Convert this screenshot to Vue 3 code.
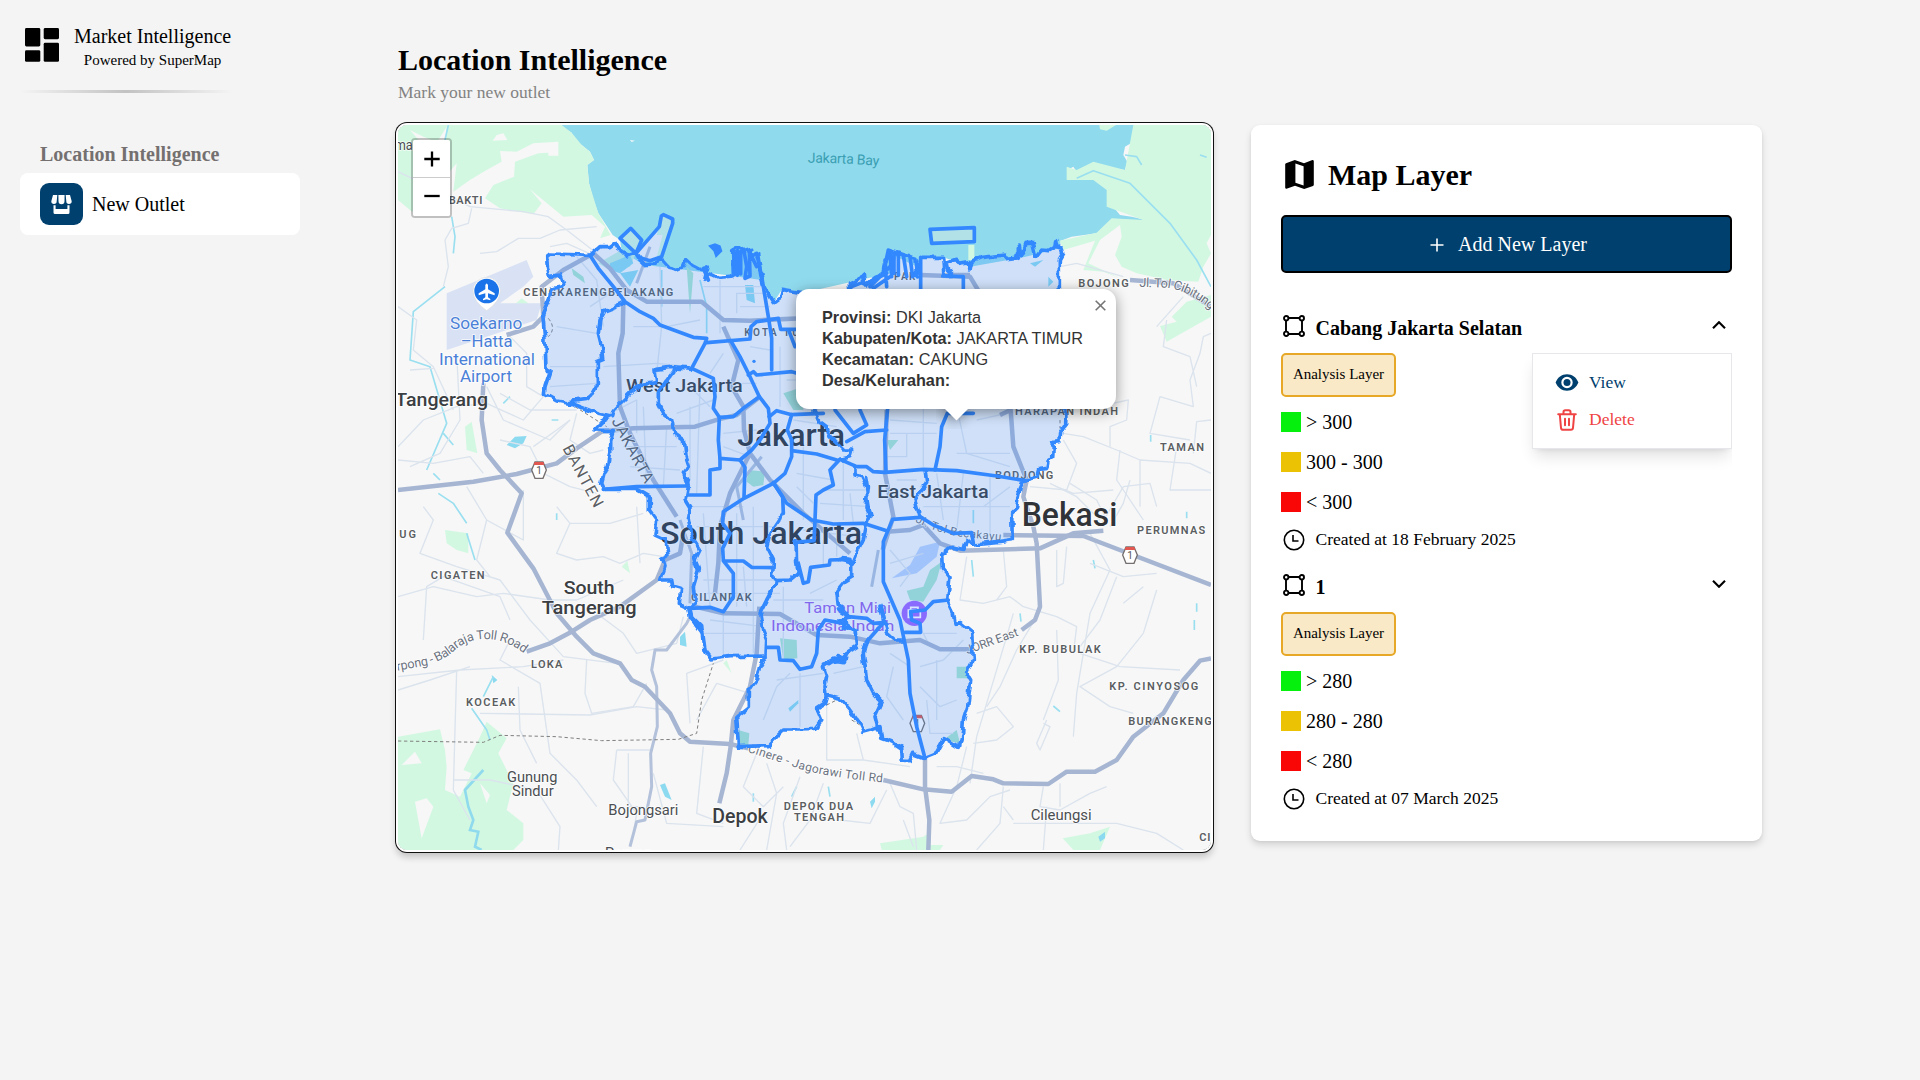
<script setup>
import { ref } from 'vue'

const layers = ref([
  { name: 'Cabang Jakarta Selatan', value: 300, created: '18 February 2025', open: true },
  { name: '1', value: 280, created: '07 March 2025', open: false }
])

const legend = (v) => [
  { color: '#06f00d', text: `> ${v}` },
  { color: '#ecc205', text: `${v} - ${v}` },
  { color: '#f90606', text: `< ${v}` }
]

const feature = [
  ['Provinsi:', 'DKI Jakarta'],
  ['Kabupaten/Kota:', 'JAKARTA TIMUR'],
  ['Kecamatan:', 'CAKUNG'],
  ['Desa/Kelurahan:', '']
]

// Place names: text, x, baseline, width, size, kind
const places = [
  ['ma', 14, 90, 54, 44, 'town'],
  ['BAKTI', 176, 252, 101, 33, 'area'],
  ['CENGKARENGBELAKANG', 400, 529, 450, 33, 'area'],
  ['Soekarno', 180, 628, 217, 47, 'poi'],
  ['–Hatta', 212, 681, 156, 47, 'poi'],
  ['International', 147, 734, 288, 47, 'poi'],
  ['Airport', 210, 786, 156, 47, 'poi'],
  ['Tangerang', 16, 857, 278, 54, 'city'],
  ['West Jakarta', 708, 815, 350, 56, 'city'],
  ['KOTA TUA', 1063, 648, 190, 30, 'area'],
  ['Jakarta', 1042, 978, 323, 96, 'big'],
  ['PAR', 1512, 480, 64, 30, 'area'],
  ['BOJONG', 2065, 502, 151, 33, 'area'],
  ['HARAPAN INDAH', 1875, 886, 309, 33, 'area'],
  ['TAMAN', 2310, 994, 132, 33, 'area'],
  ['BODJONG', 1815, 1077, 175, 33, 'area'],
  ['UG', 28, 1253, 50, 33, 'area'],
  ['CIGATEN', 122, 1377, 162, 33, 'area'],
  ['South', 521, 1423, 153, 57, 'city'],
  ['Tangerang', 455, 1482, 285, 57, 'city'],
  ['LOKA', 423, 1643, 94, 33, 'area'],
  ['KOCEAK', 228, 1759, 148, 33, 'area'],
  ['Gunung', 351, 1985, 151, 45, 'town'],
  ['Sindur', 366, 2028, 125, 45, 'town'],
  ['Bojongsari', 655, 2086, 210, 45, 'town'],
  ['Parung', 645, 2215, 138, 45, 'town'],
  ['Depok', 967, 2110, 166, 58, 'city'],
  ['CILANDAK', 903, 1443, 182, 33, 'area'],
  ['South Jakarta', 810, 1271, 606, 96, 'big'],
  ['Taman Mini', 1243, 1480, 260, 46, 'park'],
  ['Indonesia Indah', 1143, 1534, 370, 46, 'park'],
  ['DEPOK DUA', 1181, 2071, 208, 33, 'area'],
  ['TENGAH', 1212, 2104, 150, 33, 'area'],
  ['East Jakarta', 1462, 1133, 334, 54, 'city'],
  ['Bekasi', 1895, 1217, 287, 98, 'big'],
  ['PERUMNAS 3', 2241, 1242, 240, 33, 'area'],
  ['KP. BUBULAK', 1888, 1598, 244, 33, 'area'],
  ['KP. CINYOSOG', 2158, 1710, 267, 33, 'area'],
  ['BURANGKENG', 2215, 1815, 250, 33, 'area'],
  ['Cileungsi', 1922, 2101, 183, 45, 'town'],
  ['CIBARUSAH', 2428, 2164, 200, 33, 'area']
]

const shields = [
  [447, 1050],
  [2220, 1305],
  [1582, 1810]
]

const coast =
  'M470 410L480 402 540 404 600 406 630 380 660 380 675 368 685 385 700 395 710 408 735 400 750 420 765 434 790 432 815 420 835 442 860 448 880 440 888 420 905 435 925 445 940 445 955 438 945 475 965 462 985 472 1030 468 1028 395 1045 385 1060 395 1085 388 1080 410 1103 400 1112 460 1125 510 1150 548 1172 532 1178 508 1235 518 1300 560 1380 520 1378 495 1400 485 1420 460 1425 495 1480 455 1485 420 1500 392 1525 400 1540 405 1575 415 1580 468 1590 412 1658 412 1662 468 1690 466 1672 448 1668 430 1700 418 1705 430 1735 425 1740 450 1745 425 1775 412 1845 405 1850 416 1880 412 1888 375 1895 410 1908 370 1928 370 1938 412 1955 390 1975 392 1995 380 1997 362 2000 380 2014 385 2018 400 2008 418 2008 520 2028 870 2027 915 2012 935 2010 965 1990 968 1988 1012 1975 1020 1970 1045 1945 1048 1940 1072 1900 1082 1890 1105 1885 1130 1880 1165 1865 1180 1867 1262 1830 1267 1750 1275 1730 1258 1722 1288 1685 1282 1655 1305 1657 1345 1680 1372 1673 1440 1690 1475 1695 1510 1712 1508 1745 1535 1750 1620 1730 1660 1742 1680 1733 1760 1720 1800 1718 1840 1708 1882 1662 1853 1635 1903 1605 1915 1565 1900 1555 1922 1537 1920 1535 1885 1505 1865 1475 1855 1470 1820 1445 1830 1420 1837 1405 1805 1380 1770 1350 1735 1310 1725 1303 1750 1280 1765 1295 1800 1275 1828 1230 1830 1180 1830 1160 1850 1135 1877 1045 1880 1043 1840 1040 1790 1078 1760 1078 1710 1100 1680 1108 1640 1128 1608 1020 1610 965 1617 945 1590 938 1540 905 1495 900 1465 868 1450 872 1405 848 1398 845 1380 812 1380 825 1340 818 1315 834 1305 828 1260 795 1245 800 1200 778 1170 778 1130 740 1108 640 1108 632 1090 640 1060 655 1040 662 1000 662 960 670 932 612 930 635 905 660 890 625 882 540 850 500 843 463 822 465 800 480 755 468 750 465 660 458 580 480 530 482 508 515 500 518 490 510 465 478 470 472 440Z'

const roughBorders = [
  'M705 548L690 555 645 572 630 600 625 640 635 680 638 718 622 725 622 795 605 825 590 838 540 845',
  'M905 748L840 742 795 748 800 785 760 790 720 820 690 850 670 870 665 890',
  'M855 750L835 775 805 820 805 850 820 880 845 900 852 940 880 960 885 1010 895 1040 880 1060 895 1100',
  'M895 1080L885 1140 900 1165 895 1200 910 1260 930 1290 915 1320 925 1350 910 1400 915 1450 900 1465 905 1490 935 1520 940 1570',
  'M1180 1180L1140 1240 1130 1280 1150 1320 1148 1370 1160 1385 1130 1440 1110 1480 1118 1530 1130 1560 1128 1605',
  'M1275 870L1290 905 1310 920 1320 950 1345 975 1360 990 1385 990 1380 1010 1350 1018',
  'M1395 1040L1395 1065 1415 1070 1430 1100 1435 1150 1442 1190 1428 1160 1435 1100 1430 1070',
  'M1442 1180L1430 1210 1420 1260 1400 1300 1390 1325 1375 1320 1350 1318 1385 1330 1385 1370 1360 1385 1340 1410 1345 1455 1370 1480 1360 1500 1395 1530 1400 1580 1370 1600 1360 1625 1330 1620 1300 1640 1310 1670 1305 1700 1308 1725',
  'M1345 1470L1380 1490 1350 1500 1370 1510 1360 1530 1385 1520M1300 1632L1350 1620 1340 1610 1370 1615',
  'M1605 1050L1610 1090 1590 1115 1575 1140 1590 1190',
  'M1430 1560L1420 1600 1430 1680 1450 1720 1475 1745 1455 1790 1465 1830',
  'M1218 1265L1220 1330 1225 1360 1200 1380 1160 1382',
  'M1470 1455L1480 1500 1492 1540 1515 1560 1545 1560'
]

const borders = [
  'M600 406L625 445 670 500 705 545 750 575 790 595 810 615 910 652 950 655 945 670 905 745',
  'M950 668L1080 657 1083 620 1100 605 1165 595 1172 628 1230 628M1195 628L1215 680',
  'M1100 400L1115 470 1135 590 1145 655 1145 750',
  'M1022 662L1050 710 1075 760 1108 830 1135 865 1138 890',
  'M1075 765L1090 755 1100 765 1205 755 1230 762',
  'M905 745L970 775 975 830 970 865 988 892 985 960 990 1015 1050 1020',
  'M988 892L1030 890 1060 865 1108 830',
  'M640 1108L740 1100 890 1098',
  'M990 1015L990 1045 960 1050 960 1125 895 1125',
  'M1138 890L1140 910 1110 960 1085 990 1050 1020 1065 1042 1062 1130',
  'M1138 890L1160 872 1205 884 1300 880M1205 884L1192 930 1205 960 1205 1010 1185 1060 1150 1090 1062 1135 1000 1175 998 1210 1020 1240 998 1285 1000 1320',
  'M1205 992L1280 1002 1340 1020M1150 1088L1178 1130 1180 1180',
  'M1150 1088L1190 1150 1265 1200 1330 1212 1420 1210 1490 1232',
  'M1000 1323L1060 1323 1085 1342 1150 1343M1002 1325L1030 1360 1030 1430 1000 1475 960 1462 900 1465',
  'M1218 1267L1272 1262 1275 1200 1278 1125 1300 1110 1330 1095 1320 1050 1350 1018 1400 1040 1430 1040 1450 1055 1485 1057 1600 1048 1700 1052 1820 1068 1905 1082',
  'M1225 1330L1240 1390 1255 1385 1262 1342 1318 1335 1320 1320 1380 1318',
  'M1130 1582L1165 1582 1170 1620 1210 1622 1230 1648 1265 1640 1280 1600 1285 1530 1305 1500 1360 1510',
  'M1335 870L1390 940 1430 915 1410 870M1370 965L1425 935 1490 930',
  'M1493 865L1484 960 1488 1055M1750 880H1672L1655 920 1650 980 1635 1050',
  'M1590 1192L1508 1198 1480 1265 1480 1385 1530 1500 1555 1620 1560 1720 1580 1820 1605 1915',
  'M1590 1190L1630 1215 1690 1240 1745 1238 1750 1270',
  'M1375 1490L1430 1495 1450 1510 1480 1508 1430 1565M1545 1537H1592L1590 1510 1565 1500 1562 1475 1605 1470 1630 1445 1675 1440',
  'M1620 328L1753 323 1753 365 1625 370Z',
  'M1592 412V515M1658 468L1720 470V515',
  'M690 355L722 325 755 360 738 400Z',
  'M738 400L808 320 814 288 820 284 848 297 848 310 815 410 780 422 745 412Z',
  'M1032 398V465M1042 392V466M1052 395V462M1062 392L1070 440 1065 475 1080 468 1078 395 1100 440',
  'M1485 420L1490 500M1500 395L1505 470M1512 405V460M1525 400V465M1540 405L1550 470M1560 410L1568 470M1430 490L1490 460M1440 500L1500 440M1450 505L1500 470M1885 385V415M1882 405L1900 400',
  'M940 445L955 480M1385 500L1410 490M1495 390L1480 460'
]

const highways = [
  'M24 1110L250 1085 380 1062 500 1030 560 985 635 935',
  'M630 935L730 925 915 920 985 898 1040 885 1110 830',
  'M280 790L275 900 290 1000 330 1050 395 1120 352 1238 430 1345 500 1480 560 1550 610 1600 690 1630 725 1680 765 1700 840 1780 870 1840 900 1865 1020 1872 1075 1885',
  'M410 1595L480 1570 545 1535 600 1500 690 1460 800 1380 825 1320 870 1300 880 1240',
  'M350 645L430 620 460 590 455 500 520 450 600 406',
  'M610 400L660 445 710 510 770 545 935 545 1000 600 1080 602 1235 595',
  'M700 550L698 640 685 700 690 860 720 940 790 1080 860 1190',
  'M1000 620L1045 720 1025 800 1060 860 1062 930 1080 1000 1140 1080 1240 1180 1380 1300',
  'M1080 1000L1020 1120 990 1220 985 1330 975 1420',
  'M915 1460L1000 1480 1170 1482 1280 1545 1380 1550 1470 1570 1590 1560 1650 1588 1740 1588',
  'M1895 1530L1935 1500 1950 1460 1940 1270 1930 1220 1900 1130 1910 1080 1870 980 1862 870 1830 885',
  'M1490 870L1485 1060 1510 1190 1478 1290',
  'M1490 1235L1560 1230 1600 1215 1650 1270 1710 1292 1950 1285 2050 1240 2140 1232',
  'M1840 1245L2080 1248 2463 1395',
  'M2463 1615L2430 1622 2380 1680 2320 1780 2230 1850 2180 1920 2115 1955 2030 1955 1975 1992 1840 1990 1810 1978 1745 1968 1685 2015 1600 2008 1480 1980',
  'M1605 1910L1605 2000 1618 2100 1615 2190',
  'M1108 1460L1100 1600 1080 1700 1030 1800 1022 1880 1010 1960 988 2050',
  'M1590 465L1740 470 1770 520M1660 465H1740',
  'M2220 480L2350 490 2463 560'
]

const avenues = [
  'M720 2180L740 2105 765 2100 785 2000 782 1900 802 1820 800 1700 785 1650 795 1590 830 1590 890 1510 905 1480',
  'M780 380L740 490M870 1200L905 1300 900 1450',
  'M1115 1010L1040 1100 1060 1200M1465 1290L1445 1400'
]

const streets = [
  'M24 155L130 205 240 260 400 275 475 290 530 330 620 400M245 265L235 310 185 325 165 360 175 440 160 500M620 320L510 330 450 355 385 355 320 395 270 400',
  'M24 560L80 600 70 690 130 740 190 870M130 745L60 750M350 640L410 700 410 800 460 830',
  'M24 980L100 900 200 860 290 850 400 900 460 830M200 700L210 900 150 1000 60 1040M290 800L340 900 480 960 540 900M330 820L420 870 560 870M24 1020L130 1030 240 1010 280 1060',
  'M430 980L500 930 540 900M330 960L420 980 460 1060 540 1100 620 1120M560 880L540 960 600 1000 640 990',
  'M24 1430L130 1400 260 1430 340 1420 480 1440M100 1560L110 1400 160 1370 330 1430 360 1500M24 1670L210 1650 400 1640 520 1620M24 1710L120 1680 240 1640',
  'M100 1160L130 1200 90 1300 200 1340 330 1380 420 1500 520 1610 680 1630M230 1100L290 1200 400 1260 400 1110M290 1200L260 1320 300 1370',
  'M500 1160L540 1210 660 1210 760 1180M540 1210L500 1300 560 1320 640 1310 690 1330 760 1300 820 1310M740 1160L750 1330',
  'M620 1480L700 1540 740 1600 860 1570 880 1490M480 1440L560 1440 700 1380M590 1620L585 1720 605 1780 730 1760 770 1690M200 1650L190 2010 240 2100M360 1560L330 1620 450 1690 480 1900 560 1980 620 2060',
  'M190 1980L300 1980 440 2010 510 2120 505 2190M385 1700L390 1830 440 1930M270 1780L600 1785 740 1760 830 1770',
  'M680 1890L670 1980 740 2080 730 2140M680 1890H780M715 1900V2060H760M790 1960L830 2110 1000 2120M900 1810L890 1660 1000 1620M920 1800L980 1690 1080 1720',
  'M1100 1900L1060 2000 1120 2060 1180 2000M940 1880L920 2080 1000 2110M1130 1930L1160 2020 1130 2190M1230 1970L1180 2110 1190 2190M1300 1990L1260 2100 1200 2180M1050 2190L1120 2080M1490 2010L1440 2110 1350 2100M1540 2100L1570 2180',
  'M480 380L530 370 620 410M560 410L620 480 640 620M730 620L830 620 930 600M810 440L815 620 800 760M640 740L800 730 900 740M500 620L620 640M480 740L620 740M480 800L620 790',
  'M690 500L600 560M660 880L740 840 740 940M700 980L860 980M720 1040L870 1050M760 860L770 1100M830 920L820 1100M900 800L960 860M860 880L970 840M900 860V1080M930 800L920 1120',
  'M1000 700L960 760M1040 580V520H1120M1050 560H1140M990 480V640M940 500H1120M1080 680L1140 690M1010 790L1100 790M1170 680V860M1190 780H1230M1000 940L1100 930M1000 980L1080 1010',
  'M900 1160H1060M920 1220H1170M940 1180L960 1460M1040 1180V1460M1090 1160V1600M940 1380H1200M950 1420H1170M1060 1340L1070 1460M960 1500L1120 1520M1000 1480V1610M940 1540H1110M1180 1400V1620M1150 1440H1300',
  'M1210 900L1340 920M1240 930V1200M1220 1060L1330 1080M1300 1110H1430M1290 1150L1440 1160M1220 1100L1270 1150M1360 1020V1200M1380 1120L1390 1210M1240 1230L1400 1250M1300 1260V1340M1340 1220V1310M1260 1420L1340 1380',
  'M1500 940H1640M1500 900L1640 910M1550 940V1010H1490M1600 860V1040M1520 1080L1580 1080M1640 1060L1660 1200M1720 1060L1700 1230M1700 860L1730 1000 1860 1040M1700 1000H1860M1760 900L1850 880M1800 1070V1240M1600 1160H1860M1780 1160L1860 1100',
  'M2010 440L2060 430 2200 470M2463 640L2440 650 2430 700 2400 780 2410 860 2310 830 2280 940 2400 960M2330 600L2320 680 2400 710 2420 800M2300 620L2380 530M2120 860L2215 840 2210 900 2160 920 2160 980',
  'M2020 940L2080 950 2180 990 2250 1020 2400 1030 2463 1060M2020 960L2060 1030 2030 1110 1920 1100M2190 990L2180 1080 2260 1200M2250 1020V1160M2360 980L2340 1110 2463 1110M2463 900L2420 905 2410 1000',
  'M1980 1090L2060 1130 2130 1200M2040 1090L2120 1140 2150 1200M2130 1220L2200 1100 2280 1090 2300 1160M2000 1100L2050 1120 2170 1110M2220 1080L2200 1150 2160 1220',
  'M1730 1310L1710 1440 1780 1450 1860 1430 1900 1460 2000 1490 2060 1520 2050 1600M2000 1290V1400L2020 1390 2030 1280M1840 1290L1850 1400 1820 1440M1870 1480L1850 1550 1760 1850 1740 1990M2100 1240L2160 1350 2100 1480 2060 1720 2050 1850',
  'M1760 1780L1820 1760 1870 1820 1820 1860 1750 1870M1940 1490L1880 1590 1830 1700 1790 1760M2000 1530L2005 1680 1960 1800M2100 1330L2200 1370 2300 1360M2300 1410L2260 1540 2180 1640 2070 1700 2160 1760 2230 1780',
  'M2180 1370L2130 1500 2070 1580M2200 1450L2260 1400M2070 1600L2190 1640 2370 1650M1970 1800L1940 1870 1950 1890 1980 1820 1960 1810M1640 1940H1700L1780 1960M1730 1880L1700 2000 1650 2110 1730 2100 1800 2030 1860 2010',
  'M1960 2000L1950 2060 2010 2070 2100 2020 2150 2000M1840 2000L1830 2110 1760 2190M1970 2060L1960 2190M1870 2110L2030 2110 2180 2110 2300 2140 2380 2190M1840 2060L1870 2100M2010 1990L2010 2060M1500 1990L1530 2060 1570 2080 1580 2190',
  'M1310 1740V1920H1420L1560 1940M1400 1840L1420 1920M1230 1660V1820M1160 1680L1300 1660M1120 1800L1160 1700 1200 1660M1330 1660L1420 1640M1500 1600L1560 1640M1590 1640L1660 1620 1720 1560M1590 1700L1650 1760 1700 1740M1620 1580L1600 1540 1700 1540',
  'M1500 1290L1560 1360 1530 1400M1500 1330L1600 1300M1510 1640L1490 1730 1540 1800M1610 1740L1620 1840 1690 1840M1640 1620V1800'
]

const greens = [
  'M24 15H515L545 38 575 75 600 95 612 120 592 135 597 190 625 280 662 345 630 355 645 320 605 285 520 290 420 208 455 250 430 283 330 265 285 235 310 195 372 170 375 125 445 100 475 98 475 107 505 107 505 65 430 70 380 95 330 93 335 125 290 150 240 180 190 215 200 130 100 250 66 275 24 240Z',
  'M2230 15H2463V345L2450 370 2463 400 2440 440 2425 485 2330 480 2240 460 2195 440 2175 405 2195 350 2190 315 2130 360 2095 430 2190 475 2140 455 2080 450 2100 400 2115 362 2020 390 2010 362 2120 338 2165 295 2260 300 2150 260 2150 210 2110 180 2030 180 2030 140 2060 150 2110 125 2205 150Z',
  'M2128 15H2178L2150 32 2130 28Z',
  'M2310 618L2360 605 2345 590 2390 545 2463 525V590L2330 665Z',
  'M24 1850L150 1828 165 1890 170 1940 165 2010 210 2030 245 1960 220 1950 270 1850 290 1805 350 1855 325 1900 370 1990 350 2070 400 2110 400 2160 370 2190 24 2190Z',
  'M1470 2170L1600 2150 1615 2140 1610 2175 1660 2175 1650 2190H1475Z',
  'M2018 2155L2100 2140 2160 2120 2130 2190H2050Z',
  'M345 578L395 535 415 550 410 570 365 590Z',
  'M225 920L245 905 262 1000 230 990Z',
  'M165 1230L235 1240 235 1300 200 1290 170 1270Z',
  'M695 1340L712 1322 720 1360Z',
  'M1010 1620L1025 1660 1000 1630Z',
  'M1735 375H1753V420H1735Z',
  'M690 355L722 325 755 360 738 400Z',
  'M1620 328L1753 323 1753 365 1625 370Z'
]
const parks = [
  'M1075 1050L1125 1055 1120 1095 1090 1100 1070 1085Z',
  'M1170 1555L1220 1560 1222 1615 1180 1620Z',
  'M1550 1412L1600 1400 1620 1350 1655 1325 1640 1380 1600 1445 1560 1440Z',
  'M1700 1640H1730L1735 1675H1700Z',
  'M1045 1830L1078 1840 1075 1875 1045 1875Z',
  'M1490 960L1525 960 1500 990Z',
  'M545 445L580 470 585 490 550 465ZM890 440L910 460 900 580Z',
  'M1660 1860L1700 1830 1710 1870Z',
  'M1180 820L1240 800V870H1210Z'
]
const ponds = [
  'M660 430L720 405 730 430 690 460 660 450ZM690 460L745 450 720 500Z',
  'M1065 495L1090 495 1095 550 1070 540Z',
  'M350 975L375 950 410 948 400 970 375 985Z',
  'M810 1995L825 1990 845 2040 825 2030Z',
  'M870 1550L885 1535 890 1580 870 1575Z',
  'M305 1665L322 1680 310 1690Z',
  'M1195 1765L1225 1740 1225 1750 1200 1775Z',
  'M1920 430L1960 420 1935 440ZM1975 470L1990 485 1975 500Z',
  'M2125 2150L2145 2135 2145 2155 2130 2165Z',
  'M1440 2045L1455 2030 1455 2045 1445 2065Z'
]
</script>

<template>
  <div class="page">
    <aside class="sidebar">
      <div class="brand">
        <svg class="brand-icon" viewBox="0 0 34 34">
          <rect width="15.3" height="18.4" rx="1.4" /><rect x="18.7" width="15.3" height="11.2" rx="1.4" />
          <rect y="22.2" width="15.3" height="11.6" rx="1.4" /><rect x="18.7" y="14.8" width="15.3" height="19" rx="1.4" />
        </svg>
        <div class="brand-text">
          <span class="brand-name">Market Intelligence</span>
          <span class="brand-sub">Powered by SuperMap</span>
        </div>
      </div>
      <div class="rule"></div>
      <div class="nav-title">Location Intelligence</div>
      <a class="nav-item">
        <span class="nav-icon">
          <svg width="21" height="19" viewBox="0 0 21 19" fill="#fff">
            <path d="M2 0H6.3L5.7 6.3A2.6 2.6 0 0 1 .3 6.3ZM7.4 0H13.6L13.5 6.3A3 3 0 0 1 7.5 6.3ZM14.7 0H19L20.7 6.3A2.6 2.6 0 0 1 15.3 6.3Z" />
            <path d="M2.5 10.2H4.6V14H16.4V10.2H18.5V17.5Q18.5 19 17 19H4Q2.5 19 2.5 17.5Z" />
          </svg>
        </span>
        <span>New Outlet</span>
      </a>
    </aside>

    <main class="content">
      <section class="map-col">
        <h1>Location Intelligence</h1>
        <p class="subtitle">Mark your new outlet</p>
        <div class="map">
          <svg class="tiles" viewBox="24 15 2439 2175">
            <defs>
              <filter id="rough" filterUnits="userSpaceOnUse" x="24" y="15" width="2439" height="2175">
                <feTurbulence type="fractalNoise" baseFrequency="0.04" numOctaves="1" seed="4" />
                <feDisplacementMap in="SourceGraphic" scale="22" xChannelSelector="R" yChannelSelector="G" />
              </filter>
              <path id="balaraja" d="M22 1652L110 1636Q160 1622 195 1590Q240 1552 300 1558Q350 1560 408 1604" />
              <path id="cibitung" d="M2248 500L2330 503Q2400 512 2475 580" />
              <path id="jagorawi" d="M1072 1895L1230 1947Q1330 1975 1490 1988" />
              <path id="becakayu" d="M1575 1205Q1640 1238 1710 1250L1845 1263" />
              <path id="bay" d="M1253 128Q1360 128 1470 138" />
            </defs>
            <rect x="24" y="15" width="2439" height="2175" fill="#f7f7f7" />
            <path
              fill="#90daee"
              d="M505 15L545 38 550 55 575 75 600 95 612 120 592 135 597 190 610 240 625 280 645 310 668 345 690 360 695 392 760 434 860 446 1030 468 1115 480 1150 548 1175 510 1240 518 1500 460 1520 410 1580 440 1592 412 1660 412 1740 440 1900 412 2010 385 2012 362 2045 350 2120 340 2145 318 2165 298 2185 312 2250 312 2258 298 2225 290 2190 285 2165 255 2162 215 2135 185 2110 178 2040 180 2032 150 2050 140 2060 155 2080 155 2105 130 2120 140 2205 150 2212 125 2200 105 2205 80 2230 65 2256 62 2256 40 2240 15Z"
            />
            <path d="M738 400L808 320 820 284 848 297 815 410 780 422Z" fill="#f7f7f7" />
            <path d="M800 345L820 284 848 297 815 410 800 412 818 345Z" fill="#d3f8e2" />
            <path v-for="(d, i) in greens" :key="'g' + i" :d="d" fill="#d3f8e2" />
            <path d="M625 430L690 392 735 405 720 440 650 445Z" fill="#c4efe0" />
            <path d="M170 520L410 420 430 470 400 500 330 550 455 550 440 600 170 690Z" fill="#d9e2f4" />
            <path d="M1505 1375L1560 1335 1590 1280 1650 1265 1640 1310 1580 1360Z" fill="#bdd2fb" />
            <path d="M320 45L340 40 352 60 308 62ZM60 30L100 50 165 75 170 20 120 100ZM35 1935L75 1895 95 1930ZM75 2045L110 2035 130 2060 95 2155ZM270 1990L300 2025 290 2050ZM720 60L735 62 725 66Z" fill="#f7f7f7" />
            <path v-for="(d, i) in parks" :key="'p' + i" :d="d" fill="#abe5d0" />
            <path v-for="(d, i) in ponds" :key="'w' + i" :d="d" fill="#8cdaf0" />
            <g class="stream">
              <path d="M175 15L165 60M185 290L195 350 190 400M165 500L70 575 60 720 120 740 170 910 110 1050M160 940L190 975M130 1060L150 1080M360 830L340 850M485 900H505" />
              <path d="M145 1120L190 1150 230 1210M230 1240L255 1320M310 1670L280 1730M245 1765L290 1830 300 1860M500 1180V1200M1220 2000L1205 2030M1090 2020V2045" />
              <path d="M2205 105L2240 110 2255 135M2060 175L2110 152 2220 190 2340 310 2420 420 2463 500M2430 105L2450 112M1745 1320L1750 1370M2110 1320L2115 1345M1890 1480L1893 1505M2420 1450V1475M2413 1500V1530M1990 1758L2010 1775M2390 1175V1195M1750 1170V1210M2282 945V965M1315 2000L1320 2030" />
              <path d="M815 450V560M930 480L950 560 950 640" />
            </g>
            <path d="M280 1950L225 2010 235 2060 250 2100 240 2130 265 2135 255 2180 275 2190" fill="none" stroke="#90daee" stroke-width="8" />
            <g class="street"><path v-for="(d, i) in streets" :key="'s' + i" :d="d" /></g>
            <g class="avenue"><path v-for="(d, i) in avenues" :key="'a' + i" :d="d" /></g>
            <g class="highway"><path v-for="(d, i) in highways" :key="'h' + i" :d="d" /></g>
            <g class="limit">
              <path d="M24 1863L280 1867 330 1846 500 1850 635 1862 865 1858 920 1840 935 1740 970 1630" />
              <path d="M555 860L650 920M475 595Q500 625 475 650M1310 1755L1350 1735M1385 1800L1410 1815M2010 900V925" />
            </g>
            <g v-for="(s, i) in shields" :key="'sh' + i" :transform="`translate(${s[0]} ${s[1]})`">
              <path d="M-12-24H12L22 0 12 25H-12L-22 0Z" fill="#fff" stroke="#75706f" stroke-width="4" />
              <path d="M-13-24H13L16-15H-16Z" fill="#e2574f" />
              <text class="shield" x="0" y="11">1</text>
            </g>
            <g>
              <path d="M290 572Q250 545 249 513A41 41 0 0 1 331 513Q330 545 290 572Z" fill="#fff" stroke="#ddd" stroke-width="2" />
              <circle cx="290" cy="513" r="37" fill="#1a73e8" />
              <path d="M286 495Q290 486 294 495V508L314 520V526L294 520V532L301 537V541L290 538 279 541V537L286 532V520L266 526V520L286 508Z" fill="#fff" />
            </g>
            <g>
              <circle cx="1573" cy="1480" r="38" fill="#9f66ff" />
              <path d="M1555 1470H1591V1492H1555ZM1562 1470V1462H1584V1470" fill="none" stroke="#fff" stroke-width="5" />
            </g>
            <g class="labels">
              <text
                v-for="(p, i) in places"
                :key="'t' + i"
                :class="p[5]"
                :x="p[1]"
                :y="p[2]"
                :textLength="p[3]"
                :font-size="p[4]"
                :lengthAdjust="p[5] === 'area' ? 'spacing' : 'spacingAndGlyphs'"
              >{{ p[0] }}</text>
              <text class="region" font-size="48" textLength="215" transform="translate(664 903) rotate(62)">JAKARTA</text>
              <text class="region" font-size="48" textLength="205" transform="translate(517 985) rotate(62)">BANTEN</text>
              <text class="road" font-size="36" textLength="165" transform="translate(1732 1603) rotate(-20)">JORR East</text>
              <text class="water" font-size="42"><textPath href="#bay" textLength="214">Jakarta Bay</textPath></text>
              <text class="road" font-size="38"><textPath href="#balaraja" textLength="412">rpong - Balaraja Toll Road</textPath></text>
              <text class="road" font-size="38"><textPath href="#cibitung" textLength="232">Jl. Tol Cibitung</textPath></text>
              <text class="road" font-size="36"><textPath href="#jagorawi" textLength="418">Cinere - Jagorawi Toll Rd</textPath></text>
              <text class="road" font-size="34"><textPath href="#becakayu" textLength="266">Jl. Tol Becakayu</textPath></text>
            </g>
            <path :d="coast" fill="#3388ff" fill-opacity=".2" />
            <path d="M690 355L722 325 755 360 738 400ZM738 400L808 320 820 284 848 297 815 410 780 422ZM1620 328L1753 323 1753 365 1625 370Z" fill="#3388ff" fill-opacity=".2" />
            <g class="border"><path v-for="(d, i) in borders" :key="'b' + i" :d="d" /></g>
            <g class="border" filter="url(#rough)">
              <path :d="coast" />
              <path v-for="(d, i) in roughBorders" :key="'r' + i" :d="d" />
            </g>
            <path d="M958 378L975 372 990 378 995 393 978 410 972 392Z" fill="#3388ff" stroke="#3388ff" stroke-width="4" />
            <circle cx="1092" cy="724" r="5" fill="#3388ff" />
          </svg>

          <div class="zoom">
            <button aria-label="Zoom in"><svg width="16" height="16" viewBox="0 0 16 16"><path d="M8 .5V15.5M.3 8H15.7" /></svg></button>
            <button aria-label="Zoom out"><svg width="16" height="16" viewBox="0 0 16 16"><path d="M.3 8H15.7" /></svg></button>
          </div>

          <div class="popup">
            <div class="popup-body">
              <div v-for="f in feature" :key="f[0]"><b>{{ f[0] }}</b> {{ f[1] }}</div>
              <svg class="close" width="11" height="11" viewBox="0 0 11 11"><path d="M.7.7L10.3 10.3M10.3.7L.7 10.3" /></svg>
            </div>
            <div class="tip-wrap"><div class="tip"></div></div>
          </div>
        </div>
      </section>

      <section class="card">
        <div class="card-title">
          <svg width="29" height="29" viewBox="0 0 29 29">
            <path fill-rule="evenodd" d="M1 3.2L9.8.1 19 3.3 27.4.1Q28.7 0 28.8 1.3V24.8Q28.7 25.6 28 25.9L19.2 28.9 10 25.7 1.5 28.8Q.4 28.9.2 27.8V4.2Q.3 3.5 1 3.2ZM10.4 3.4V22.8L18.6 25.6V6.2Z" />
          </svg>
          <h2>Map Layer</h2>
        </div>
        <button class="add">
          <svg width="14" height="14" viewBox="0 0 14 14"><path d="M7 .5V13.5M.5 7H13.5" stroke="#fff" stroke-width="1.6" /></svg>
          <span>Add New Layer</span>
        </button>

        <article v-for="layer in layers" :key="layer.name" class="layer">
          <header>
            <svg class="frame" width="22" height="22" viewBox="0 0 22 22">
              <path d="M6 3H16M6 19H16M3 6V16M19 6V16" />
              <circle cx="3.2" cy="3.2" r="2.2" /><circle cx="18.8" cy="3.2" r="2.2" />
              <circle cx="3.2" cy="18.8" r="2.2" /><circle cx="18.8" cy="18.8" r="2.2" />
            </svg>
            <h3>{{ layer.name }}</h3>
            <svg class="chevron" width="14" height="8" viewBox="0 0 14 8">
              <path :d="layer.open ? 'M1 7.2L7 1.2 13 7.2' : 'M1 .8L7 6.8 13 .8'" />
            </svg>
          </header>
          <div class="badge">Analysis Layer</div>
          <ul>
            <li v-for="l in legend(layer.value)" :key="l.text">
              <i :style="{ background: l.color }"></i>{{ l.text }}
            </li>
          </ul>
          <footer>
            <svg class="clock" width="22" height="22" viewBox="0 0 22 22"><circle cx="11" cy="11" r="9.7" /><path d="M10 6V12H15.5" /></svg>
            <span>Created at {{ layer.created }}</span>
          </footer>
          <div v-if="layer.open" class="menu-clip">
            <div class="menu">
              <div class="menu-row view">
                <svg width="24" height="17" viewBox="0 0 24 17" fill="#00406e">
                  <path fill-rule="evenodd" d="M12 .3C6.7.3 2.7 3.4.6 8.5 2.7 13.6 6.7 16.7 12 16.7S21.3 13.6 23.4 8.5C21.3 3.4 17.3.3 12 .3ZM12 2.8A5.7 5.7 0 1 1 12 14.2 5.7 5.7 0 0 1 12 2.8Z" />
                  <circle cx="12" cy="8.5" r="3.5" />
                </svg>
                <span>View</span>
              </div>
              <div class="menu-row delete">
                <svg width="24" height="22" viewBox="0 0 24 22" fill="none" stroke="#ef4444" stroke-width="2" stroke-linecap="round" stroke-linejoin="round">
                  <path d="M3.2 5.2H20.8M4.8 5.4L6 18.9Q6.2 20.8 8 20.8H16Q17.8 20.8 18 18.9L19.2 5.4M8.5 5V3Q8.5 1.2 10.2 1.2H13.8Q15.5 1.2 15.5 3V5M10 9.8V16.3M14 9.8V16.3" />
                </svg>
                <span>Delete</span>
              </div>
            </div>
          </div>
        </article>
      </section>
    </main>
  </div>
</template>

<style>
body {
  margin: 0;
  background: #f4f4f4;
}
</style>

<style scoped>
* {
  box-sizing: border-box;
}
.page {
  display: flex;
  width: 1920px;
  height: 1080px;
  overflow: hidden;
  background: #f4f4f4;
  color: #000;
  font-family: "Liberation Serif", "Times New Roman", serif;
  font-size: 20px;
}
h1, h2, h3, p, ul { margin: 0; padding: 0; }
button { font: inherit; padding: 0; }
svg { display: block; flex: none; }

.sidebar { width: 320px; padding: 24px 20px 0; }
.brand { display: flex; align-items: flex-start; padding-left: 5px; height: 66px; }
.brand-icon { width: 34px; height: 34px; margin-top: 4px; }
.brand-text { display: flex; flex-direction: column; align-items: center; margin-left: 15px; }
.brand-name { line-height: 24px; }
.brand-sub { font-size: 15px; line-height: 24px; }
.rule { width: 212px; height: 3px; background: linear-gradient(90deg, transparent, #c2c2c2 50%, transparent); }
.nav-title { margin: 49px 0 0 20px; height: 31px; line-height: 24px; font-weight: bold; color: #757070; }
.nav-item { display: flex; align-items: center; gap: 9px; width: 280px; height: 62px; padding-left: 20px; border-radius: 8px; background: #fff; }
.nav-icon { display: flex; align-items: center; justify-content: center; width: 43px; height: 42px; border-radius: 9px; background: #00406e; }

.content { display: flex; align-items: flex-start; padding-left: 78px; }
.map-col { width: 813px; padding-top: 42px; }
h1 { height: 36px; font-size: 30px; line-height: 35px; }
.subtitle { height: 47px; font-size: 17.5px; line-height: 28px; color: #828282; }
.map {
  position: relative;
  width: 813px;
  height: 725px;
  border-radius: 9px;
  box-shadow: 0 0 0 2px #fff, 0 0 0 3px #101010, 0 5px 7px 2px rgba(0, 0, 0, 0.2);
}
.tiles { width: 813px; height: 725px; border-radius: 9px; overflow: hidden; }
.street path, .avenue path, .highway path, .stream path, .limit path, .border path { fill: none; stroke-linejoin: round; }
.street path { stroke: #dbe3ed; stroke-width: 4; }
.avenue path { stroke: #b3c1da; stroke-width: 9; }
.highway path { stroke: #a5b5d2; stroke-width: 13.5; }
.stream path { stroke: #9adff0; stroke-width: 5; }
.limit path { stroke: #808080; stroke-width: 3; stroke-dasharray: 10 8; }
.border path { stroke: #3388ff; stroke-width: 11; stroke-linecap: round; }
.labels text { font-family: Roboto, sans-serif; paint-order: stroke; stroke: #fff; stroke-width: 5; stroke-opacity: 0.8; stroke-linejoin: round; fill: #4b4e52; }
.labels .big { fill: #303338; font-weight: 500; }
.labels .city { fill: #3b3e42; font-weight: 500; }
.labels .area { font-weight: 600; fill: #5a5d61; }
.labels .poi { fill: #4a80d8; }
.labels .park { fill: #9560e8; }
.labels .water { fill: #3a9fb2; stroke: none; }
.labels .road { fill: #6b7280; }
.labels .region { fill: #5b5e63; }
.shield { font: 30px Roboto, sans-serif; fill: #555; text-anchor: middle; }

.zoom { position: absolute; left: 13px; top: 13px; display: flex; flex-direction: column; border: 2px solid rgba(0, 0, 0, 0.22); border-radius: 4px; background-clip: padding-box; }
.zoom button { display: flex; align-items: center; justify-content: center; width: 37px; height: 38px; border: 0; background: #fff; border-radius: 0 0 2px 2px; }
.zoom button:first-child { height: 38px; border-bottom: 1px solid #ccc; border-radius: 2px 2px 0 0; }
.zoom button:last-child { padding-bottom: 2px; }
.zoom path { stroke: #000; stroke-width: 2.3; }

.popup { position: absolute; left: 398px; top: 164px; width: 320px; }
.popup-body {
  position: relative;
  height: 120px;
  padding: 18px 0 0 26px;
  border-radius: 13px;
  background: #fff;
  box-shadow: 0 3px 14px rgba(0, 0, 0, 0.4);
  color: #333;
  font: 16.25px/21px "Liberation Sans", Arial, sans-serif;
  white-space: nowrap;
}
.close { position: absolute; right: 10px; top: 11px; }
.close path { stroke: #757575; stroke-width: 1.6; }
.tip-wrap { position: relative; width: 40px; height: 20px; margin: 0 auto; overflow: hidden; }
.tip { width: 17px; height: 17px; margin: -9px auto 0; background: #fff; transform: rotate(45deg); box-shadow: 0 3px 14px rgba(0, 0, 0, 0.4); }

.card { width: 511px; height: 716px; margin: 125px 0 0 40px; padding: 30px 30px 0; border-radius: 9px; background: #fff; box-shadow: 0 4px 7px rgba(0, 0, 0, 0.13), 0 1px 3px rgba(0, 0, 0, 0.06); }
.card-title { display: flex; align-items: flex-start; gap: 14px; height: 60px; padding: 5px 0 0 4px; }
h2 { font-size: 30px; line-height: 35px; margin-top: -3px; }
.add { display: flex; align-items: center; justify-content: center; gap: 14px; width: 451px; height: 58px; margin-bottom: 35px; padding: 1px 0 0 4px; border: 2px solid #000; border-radius: 5px; background: #00406e; color: #fff; }

.layer { position: relative; height: 259px; }
.layer header { display: flex; height: 45px; padding: 7px 6px 0 1.5px; }
h3 { flex: 1; margin-left: 11px; font-size: 20px; line-height: 24px; padding-top: 1px; }
.frame path, .frame circle, .clock path, .clock circle, .chevron path { fill: none; stroke: #000; stroke-width: 1.9; }
.chevron { margin-top: 6px; }
.chevron path { stroke-width: 2.1; }
.clock path, .clock circle { stroke-width: 1.6; }
.badge { width: 115px; height: 44px; border: 2px solid #e6a826; border-radius: 5px; background: #fae9c6; font-size: 15px; line-height: 39px; text-align: center; }
ul { margin-top: 5px; list-style: none; }
li { display: flex; align-items: center; height: 40px; gap: 5px; }
li i { width: 20px; height: 20px; }
.layer footer { display: flex; align-items: center; gap: 11px; height: 35px; padding-left: 1.5px; font-size: 17.5px; }
.menu-clip { position: absolute; right: 0; top: 45px; width: 230px; height: 130px; overflow: hidden; }
.menu { width: 200px; height: 96px; margin-left: 30px; padding: 10px 0 0 22px; border: 1px solid #e5e7eb; background: #fff; box-shadow: 0 10px 15px -3px rgba(0, 0, 0, 0.12), 0 4px 6px -4px rgba(0, 0, 0, 0.1); }
.menu-row { display: flex; align-items: center; gap: 10px; height: 37px; font-size: 17.5px; }
.view { color: #00406e; }
.delete { color: #ef4444; }
</style>
